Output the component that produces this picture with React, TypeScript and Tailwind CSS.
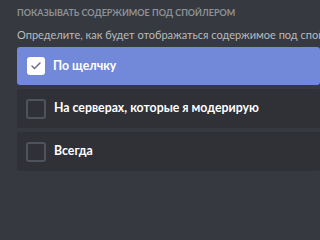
import { Check } from 'lucide-react';

const options = [
  { label: 'По щелчку', checked: true },
  { label: 'На серверах, которые я модерирую', checked: false },
  { label: 'Всегда', checked: false },
];

export default function App() {
  return (
    <div className="min-h-screen w-full overflow-hidden bg-[#36393f] pl-[17px] pt-[7px] font-['Lato',sans-serif]">
      <h2 className="whitespace-nowrap text-[9px] font-bold uppercase leading-[12px] text-[#8e9297]">
        Показывать содержимое под спойлером
      </h2>
      <p className="mt-[8px] whitespace-nowrap text-[11px] leading-[16px] text-[#b9bbbe]">
        Определите, как будет отображаться содержимое под спойлером
      </p>
      <div className="mt-[4px] flex flex-col gap-[4px]">
        {options.map(o => (
          <div
            key={o.label}
            className={
              o.checked
                ? 'flex h-[38px] items-center gap-[8px] rounded-[3px] bg-[#7289da] pl-[10px]'
                : 'flex h-[39px] items-center gap-[8px] rounded-[3px] bg-[#2f3136] pl-[9px]'
            }
          >
            {o.checked ? (
              <div className="flex h-[18px] w-[18px] items-center justify-center rounded-[3px] bg-white">
                <Check className="h-[12px] w-[12px] text-[#6b6f8a]" strokeWidth={3} />
              </div>
            ) : (
              <div className="h-[20px] w-[20px] rounded-[3px] border-2 border-[#4f545c]" />
            )}
            <span className="whitespace-nowrap text-[12.3px] font-bold text-white">{o.label}</span>
          </div>
        ))}
      </div>
    </div>
  );
}
